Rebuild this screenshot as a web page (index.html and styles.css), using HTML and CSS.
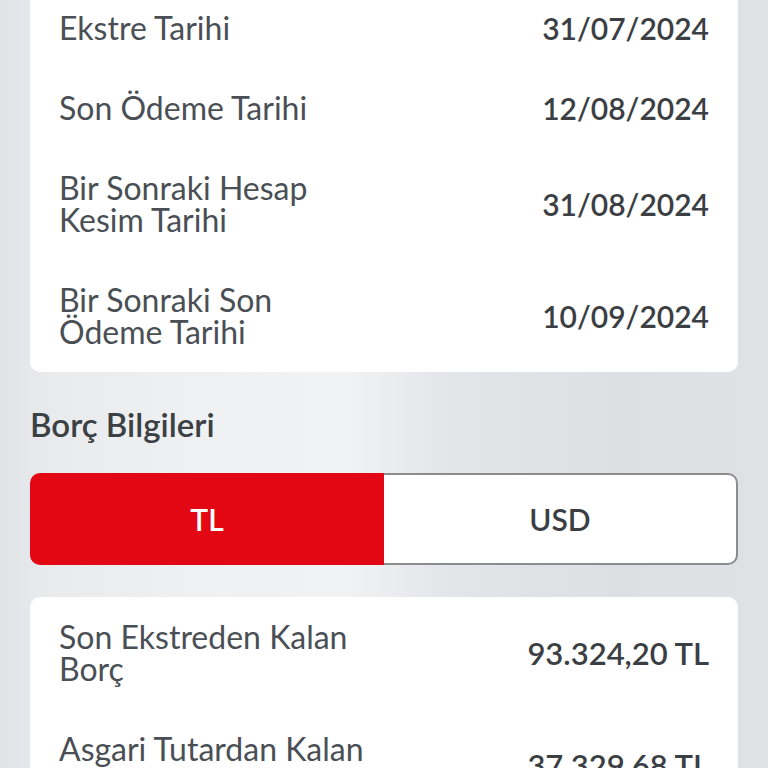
FILE: index.html
```html
<!DOCTYPE html>
<html lang="tr">
<head>
<meta charset="utf-8">
<link rel="stylesheet" href="styles.css">
</head>
<body>
<div class="page">
  <div class="card card-top">
    <div class="row"><div class="label">Ekstre Tarihi</div><div class="value">31/07/2024</div></div>
    <div class="row"><div class="label">Son Ödeme Tarihi</div><div class="value">12/08/2024</div></div>
    <div class="row"><div class="label">Bir Sonraki Hesap<br>Kesim Tarihi</div><div class="value">31/08/2024</div></div>
    <div class="row"><div class="label">Bir Sonraki Son<br>Ödeme Tarihi</div><div class="value">10/09/2024</div></div>
  </div>
  <h2 class="section-title">Borç Bilgileri</h2>
  <div class="toggle">
    <div class="tab tab-active">TL</div>
    <div class="tab tab-idle">USD</div>
  </div>
  <div class="card">
    <div class="row"><div class="label">Son Ekstreden Kalan<br>Borç</div><div class="value value-amount">93.324,20 TL</div></div>
    <div class="row"><div class="label">Asgari Tutardan Kalan<br>Borç</div><div class="value value-amount">37.329,68 TL</div></div>
  </div>
</div>
</body>
</html>
```
FILE: styles.css
```css
html, body {
  margin: 0;
  padding: 0;
  height: 100%;
  overflow: hidden;
}
body {
  font-family: Lato, "Open Sans", sans-serif;
  color: #474c52;
  background:
    linear-gradient(90deg, #e1e4e7 0, #e8eaec 6%, #eef0f2 25%, #f1f2f4 45%, #e3e6e9 58%, #dde0e3 80%, #dfe2e5 100%);
}
.page {
  padding: 0 30px;
}
.card {
  background: #fff;
  border-radius: 10px;
  padding: 0 29px;
}
.card-top {
  margin-top: -12px;
}
.row {
  display: flex;
  justify-content: space-between;
  align-items: center;
  padding: 24px 0;
  font-size: 32px;
  line-height: 32px;
}
.label {
  color: #4a4f55;
}
.value {
  font-size: 30px;
  font-weight: 600;
  color: #3b3f44;
  white-space: nowrap;
}
.value-amount {
  font-size: 31px;
}
.section-title {
  margin: 36px 0 33px;
  font-size: 33px;
  line-height: 32px;
  font-weight: 600;
  color: #3b4045;
}
.toggle {
  display: grid;
  grid-template-columns: 1fr 1fr;
  height: 92px;
  margin-bottom: 32px;
}
.tab {
  display: flex;
  align-items: center;
  justify-content: center;
  font-size: 30px;
  font-weight: 600;
}
.tab-active {
  background: #e30613;
  color: #fff;
  border-radius: 10px 0 0 10px;
}
.tab-idle {
  background: #fff;
  color: #3b3f44;
  border: 2px solid #8a8c8e;
  border-left: none;
  border-radius: 0 10px 10px 0;
}
```
